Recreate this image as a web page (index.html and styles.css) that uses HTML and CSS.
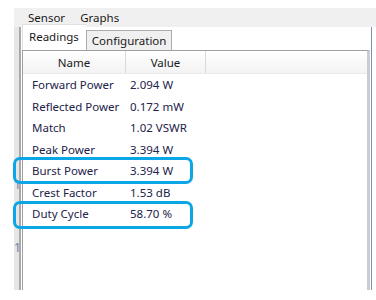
FILE: index.html
```html
<!DOCTYPE html>
<html lang="en">
<head>
    <meta charset="UTF-8">
    <meta name="viewport" content="width=device-width, initial-scale=1.0">
    <title>Sensor Readings</title>
    <link rel="stylesheet" href="styles.css">
</head>
<body>
    <div class="app">
        <div class="menubar">
            <span class="menu-item">Sensor</span>
            <span class="menu-item">Graphs</span>
        </div>
        <div class="main">
            <div class="gutter">
                <span class="gutter-mark mark-1">1</span>
                <span class="gutter-mark mark-2">1</span>
            </div>
            <div class="tabs">
                <div class="tabstrip">
                    <div class="tab active">Readings</div>
                    <div class="tab">Configuration</div>
                </div>
                <div class="tabpage">
                    <div class="list">
                        <div class="list-header">
                            <div class="col col-name">Name</div>
                            <div class="col col-value">Value</div>
                            <div class="col col-rest"></div>
                        </div>
                        <div class="list-body" id="readings"></div>
                    </div>
                </div>
            </div>
            <div class="edge"></div>
        </div>
    </div>

    <!-- highlight annotations drawn over the list -->
    <div class="highlight highlight-burst"></div>
    <div class="highlight highlight-duty"></div>

    <script>
        const readings = [
            ['Forward Power', '2.094 W'],
            ['Reflected Power', '0.172 mW'],
            ['Match', '1.02 VSWR'],
            ['Peak Power', '3.394 W'],
            ['Burst Power', '3.394 W'],
            ['Crest Factor', '1.53 dB'],
            ['Duty Cycle', '58.70 %']
        ];

        document.getElementById('readings').innerHTML = readings.map(([name, value]) => `
            <div class="row">
                <div class="cell cell-name">${name}</div>
                <div class="cell cell-value">${value}</div>
            </div>
        `).join('');
    </script>
</body>
</html>
```

FILE: styles.css
```css
body {
    margin: 0;
    width: 376px;
    height: 300px;
    overflow: hidden;
    background: #fff;
    font-family: "Noto Sans", "Open Sans", sans-serif;
    font-size: 11.5px;
    color: #22224a;
    position: relative;
}
.app {
    margin: 8px 0 0 14px;
    height: 282px;
    display: flex;
    flex-direction: column;
}
.menubar {
    height: 19px;
    background: #f0f0f0;
    display: flex;
    align-items: center;
    gap: 15px;
    padding-left: 14px;
    color: #1a1a1a;
}
.main {
    flex: 1;
    display: flex;
}
.gutter {
    width: 5px;
    background: #e6e6e6;
    border-right: 2px solid #a9a9a9;
    position: relative;
    overflow: hidden;
}
.gutter-mark {
    position: absolute;
    left: 0;
    font-size: 12px;
    line-height: 14px;
    color: #6f7f9e;
}
.mark-1 { top: 151px; }
.mark-2 { top: 214px; }
.tabs {
    width: 350px;
    display: flex;
    flex-direction: column;
}
.tabstrip {
    height: 23px;
    display: flex;
    align-items: flex-end;
    padding-left: 1px;
}
.tab {
    height: 19px;
    padding: 0 5px;
    display: flex;
    align-items: center;
    background: #f0f0f0;
    border: 1px solid #acacac;
    border-bottom: none;
    color: #1a1a1a;
}
.tab.active {
    height: 23px;
    background: #fff;
    border-color: #e0e0e0;
    border-right: none;
    padding: 0 7px 2px 6px;
}
.tabpage {
    flex: 1;
    display: flex;
    padding-left: 1px;
}
.list {
    width: 344px;
    border: 1px solid #a0a0a0;
    border-right: 3px solid #c9ccd0;
    border-bottom: none;
    display: flex;
    flex-direction: column;
}
.list-header {
    height: 22px;
    display: flex;
    background: linear-gradient(#ffffff, #f3f3f3);
    border-bottom: 1px solid #eaeaea;
    color: #1a1a1a;
}
.col {
    display: flex;
    align-items: center;
    justify-content: center;
    border-right: 1px solid #dadada;
}
.col-name { width: 102px; }
.col-value { width: 79px; }
.col-rest { flex: 1; border-right: none; }
.list-body {
    display: flex;
    flex-direction: column;
}
.row {
    height: 21.5px;
    display: flex;
    align-items: center;
}
.cell-name {
    width: 98px;
    padding-left: 9px;
}
.edge {
    width: 1px;
    background: #7e90b0;
}
.highlight {
    position: absolute;
    left: 13px;
    width: 174px;
    border: 3px solid #0aa6e6;
    border-radius: 7px;
}
.highlight-burst {
    top: 157px;
    height: 21px;
}
.highlight-duty {
    top: 201px;
    height: 22px;
}
```
